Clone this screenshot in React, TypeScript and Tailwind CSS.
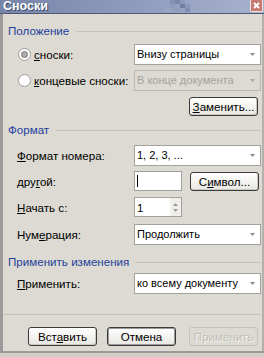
import React from "react";

function Arrow({ disabled }: { disabled?: boolean }) {
  return (
    <svg width="5" height="3" viewBox="0 0 5 3" className="mr-[5px] shrink-0">
      <polygon points="0,0 5,0 2.5,3" fill={disabled ? "#a9a9a9" : "#8c8c8c"} />
    </svg>
  );
}

function Combo({ value, disabled }: { value: string; disabled?: boolean }) {
  return (
    <div
      className={
        disabled
          ? "flex h-[21px] w-[127px] items-center justify-between border border-[#b9b8b2] bg-[#dcdad2] pl-[2px] text-[11px] text-[#a3a29c]"
          : "flex h-[21px] w-[127px] items-center justify-between border border-[#a2a19c] bg-white pl-[2px] text-[11px] text-black"
      }
    >
      <span className="min-w-0 overflow-hidden whitespace-nowrap">{value}</span>
      <Arrow disabled={disabled} />
    </div>
  );
}

function Btn({ children, disabled, active }: { children: React.ReactNode; disabled?: boolean; active?: boolean }) {
  if (disabled) {
    return (
      <div className="flex h-[19px] w-[69px] items-center justify-center rounded-[3px] border border-[#c3c1b9] bg-[#dcdad2] text-[#c0beb6] [text-shadow:1px_1px_0_#f4f3ef]">
        {children}
      </div>
    );
  }
  return (
    <div
      className={
        "flex h-[19px] w-[69px] items-center justify-center rounded-[3px] border border-[#3a3a3a] bg-linear-to-b from-white to-[#e8e7e2] text-black " +
        (active ? "shadow-[inset_0_0_0_1px_#9a9a9a]" : "shadow-[inset_-1px_-1px_0_#c9c8c2]")
      }
    >
      {children}
    </div>
  );
}

function Header({ title }: { title: string }) {
  return (
    <div className="flex h-[12px] items-center pl-[5px] pr-px">
      <span className="whitespace-nowrap leading-[12px] text-[#1f3f9d]">{title}</span>
      <div className="ml-[7px] h-px flex-1 bg-[#c4c2ba]" />
    </div>
  );
}

function Radio({ checked }: { checked?: boolean }) {
  return (
    <div className="flex h-[13px] w-[13px] items-center justify-center rounded-full border border-[#9d9c98] bg-white">
      {checked && <div className="h-[7px] w-[7px] rounded-full bg-radial from-[#b8b8b8] to-[#7e7e7e]" />}
    </div>
  );
}

function Row({ label, children }: { label: React.ReactNode; children: React.ReactNode }) {
  return (
    <div className="flex items-center">
      <div className="w-[131px] whitespace-nowrap pl-[14px]">{label}</div>
      {children}
    </div>
  );
}

function Checker() {
  const cells: [number, number, string][] = [
    [0, 0, "#93a0bf"], [5, 0, "#8592b4"], [10, 0, "#7987aa"], [15, 0, "#8b98b9"],
    [5, 4, "#8d9abb"], [15, 4, "#707fa4"], [20, 4, "#8c99ba"], [10, 8, "#8f9cbc"],
    [20, 8, "#7e8cae"], [25, 0, "#9aa6c4"], [0, 8, "#9ba7c4"],
  ];
  return (
    <svg width="30" height="13" viewBox="0 0 30 13" className="shrink-0">
      {cells.map(([x, y, c], i) => (
        <rect key={i} x={x} y={y} width="5" height="4" fill={c} />
      ))}
    </svg>
  );
}

export default function App() {
  return (
    <div className="flex h-[357px] w-[264px] flex-col overflow-hidden bg-[#a8a8a6] font-['Liberation_Sans',Arial,sans-serif] text-[11.6px] leading-[13px] text-black">
      <div className="flex h-[13px] items-start bg-linear-to-r from-[#7785a9] via-[#8e9bbb] to-[#a7b2cd]">
        <span className="ml-[3px] mt-0 text-[12.5px] font-bold leading-[12px] text-white [text-shadow:1px_1px_0_#3d4868]">
          Сноски
        </span>
        <div className="ml-[117px]">
          <Checker />
        </div>
        <div className="flex-1" />
        <div className="mr-px flex h-[12px] w-[13px] items-center justify-center rounded-b-[2px] border border-t-0 border-[#efe3e0] bg-[#c77a71]">
          <svg width="7" height="7" viewBox="0 0 7 7">
            <path d="M1 1L6 6M6 1L1 6" stroke="white" strokeWidth="1.8" />
          </svg>
        </div>
      </div>
      <div className="h-px bg-[#4e5976]" />
      <div className="flex flex-1">
        <div className="w-[3px] bg-[#9a9a98]" />
        <div className="flex w-[259px] flex-col bg-[#dcdad2] pt-[11px]">
          <Header title="Положение" />
          <div className="mt-[7px] flex items-center">
            <div className="flex w-[131px] items-center whitespace-nowrap pl-[15px]">
              <Radio checked />
              <span className="ml-[3px]">
                <u>с</u>носки:
              </span>
            </div>
            <Combo value="Внизу страницы" />
          </div>
          <div className="mt-[5px] flex items-center">
            <div className="flex w-[131px] items-center whitespace-nowrap pl-[15px]">
              <Radio />
              <span className="ml-[3px]">
                <u>к</u>онцевые сноски:
              </span>
            </div>
            <Combo value="В конце документа" disabled />
          </div>
          <div className="mt-[6px] flex justify-end pr-[4px]">
            <Btn>
              <span>
                <u>З</u>аменить...
              </span>
            </Btn>
          </div>

          <div className="mt-[8px]">
            <Header title="Формат" />
          </div>
          <div className="mt-[9px]">
            <Row
              label={
                <span>
                  <u>Ф</u>ормат номера:
                </span>
              }
            >
              <Combo value="1, 2, 3, ..." />
            </Row>
          </div>
          <div className="mt-[5px]">
            <Row
              label={
                <span>
                  дру<u>г</u>ой:
                </span>
              }
            >
              <div className="flex h-[20px] w-[48px] items-center border border-[#a2a19c] bg-white pl-[2px]">
                <div className="h-[12px] w-px bg-black" />
              </div>
              <div className="ml-[8px]">
                <Btn>
                  <span>
                    С<u>и</u>мвол...
                  </span>
                </Btn>
              </div>
            </Row>
          </div>
          <div className="mt-[6px]">
            <Row
              label={
                <span>
                  <u>Н</u>ачать с:
                </span>
              }
            >
              <div className="flex h-[20px] w-[48px] items-center justify-between border border-[#a2a19c] bg-white pl-[2px]">
                <span>1</span>
                <div className="flex h-full w-[11px] flex-col items-center justify-center gap-[3px] bg-[#f0efeb]">
                  <svg width="5" height="3" viewBox="0 0 5 3">
                    <polygon points="2.5,0 5,3 0,3" fill="#9a9a9a" />
                  </svg>
                  <svg width="5" height="3" viewBox="0 0 5 3">
                    <polygon points="0,0 5,0 2.5,3" fill="#9a9a9a" />
                  </svg>
                </div>
              </div>
            </Row>
          </div>
          <div className="mt-[7px]">
            <Row
              label={
                <span>
                  Нум<u>е</u>рация:
                </span>
              }
            >
              <Combo value="Продолжить" />
            </Row>
          </div>

          <div className="mt-[11px]">
            <Header title="Применить изменения" />
          </div>
          <div className="mt-[5px]">
            <Row
              label={
                <span>
                  <u>П</u>рименить:
                </span>
              }
            >
              <Combo value="ко всему документу" />
            </Row>
          </div>

          <div className="mt-[20px] mr-px h-px bg-[#c4c2ba]" />
          <div className="mt-[12px] flex pl-[25px]">
            <Btn>
              <span>
                Вст<u>а</u>вить
              </span>
            </Btn>
            <div className="ml-[10px]">
              <Btn active>Отмена</Btn>
            </div>
            <div className="ml-[13px]">
              <Btn disabled>Применить</Btn>
            </div>
          </div>
          <div className="flex-1" />
        </div>
        <div className="w-[2px] bg-[#b2b1ad]" />
      </div>
      <div className="h-[2px] bg-[#9a9a98]" />
      <div className="h-[4px] bg-[#d0cec6]" />
    </div>
  );
}
